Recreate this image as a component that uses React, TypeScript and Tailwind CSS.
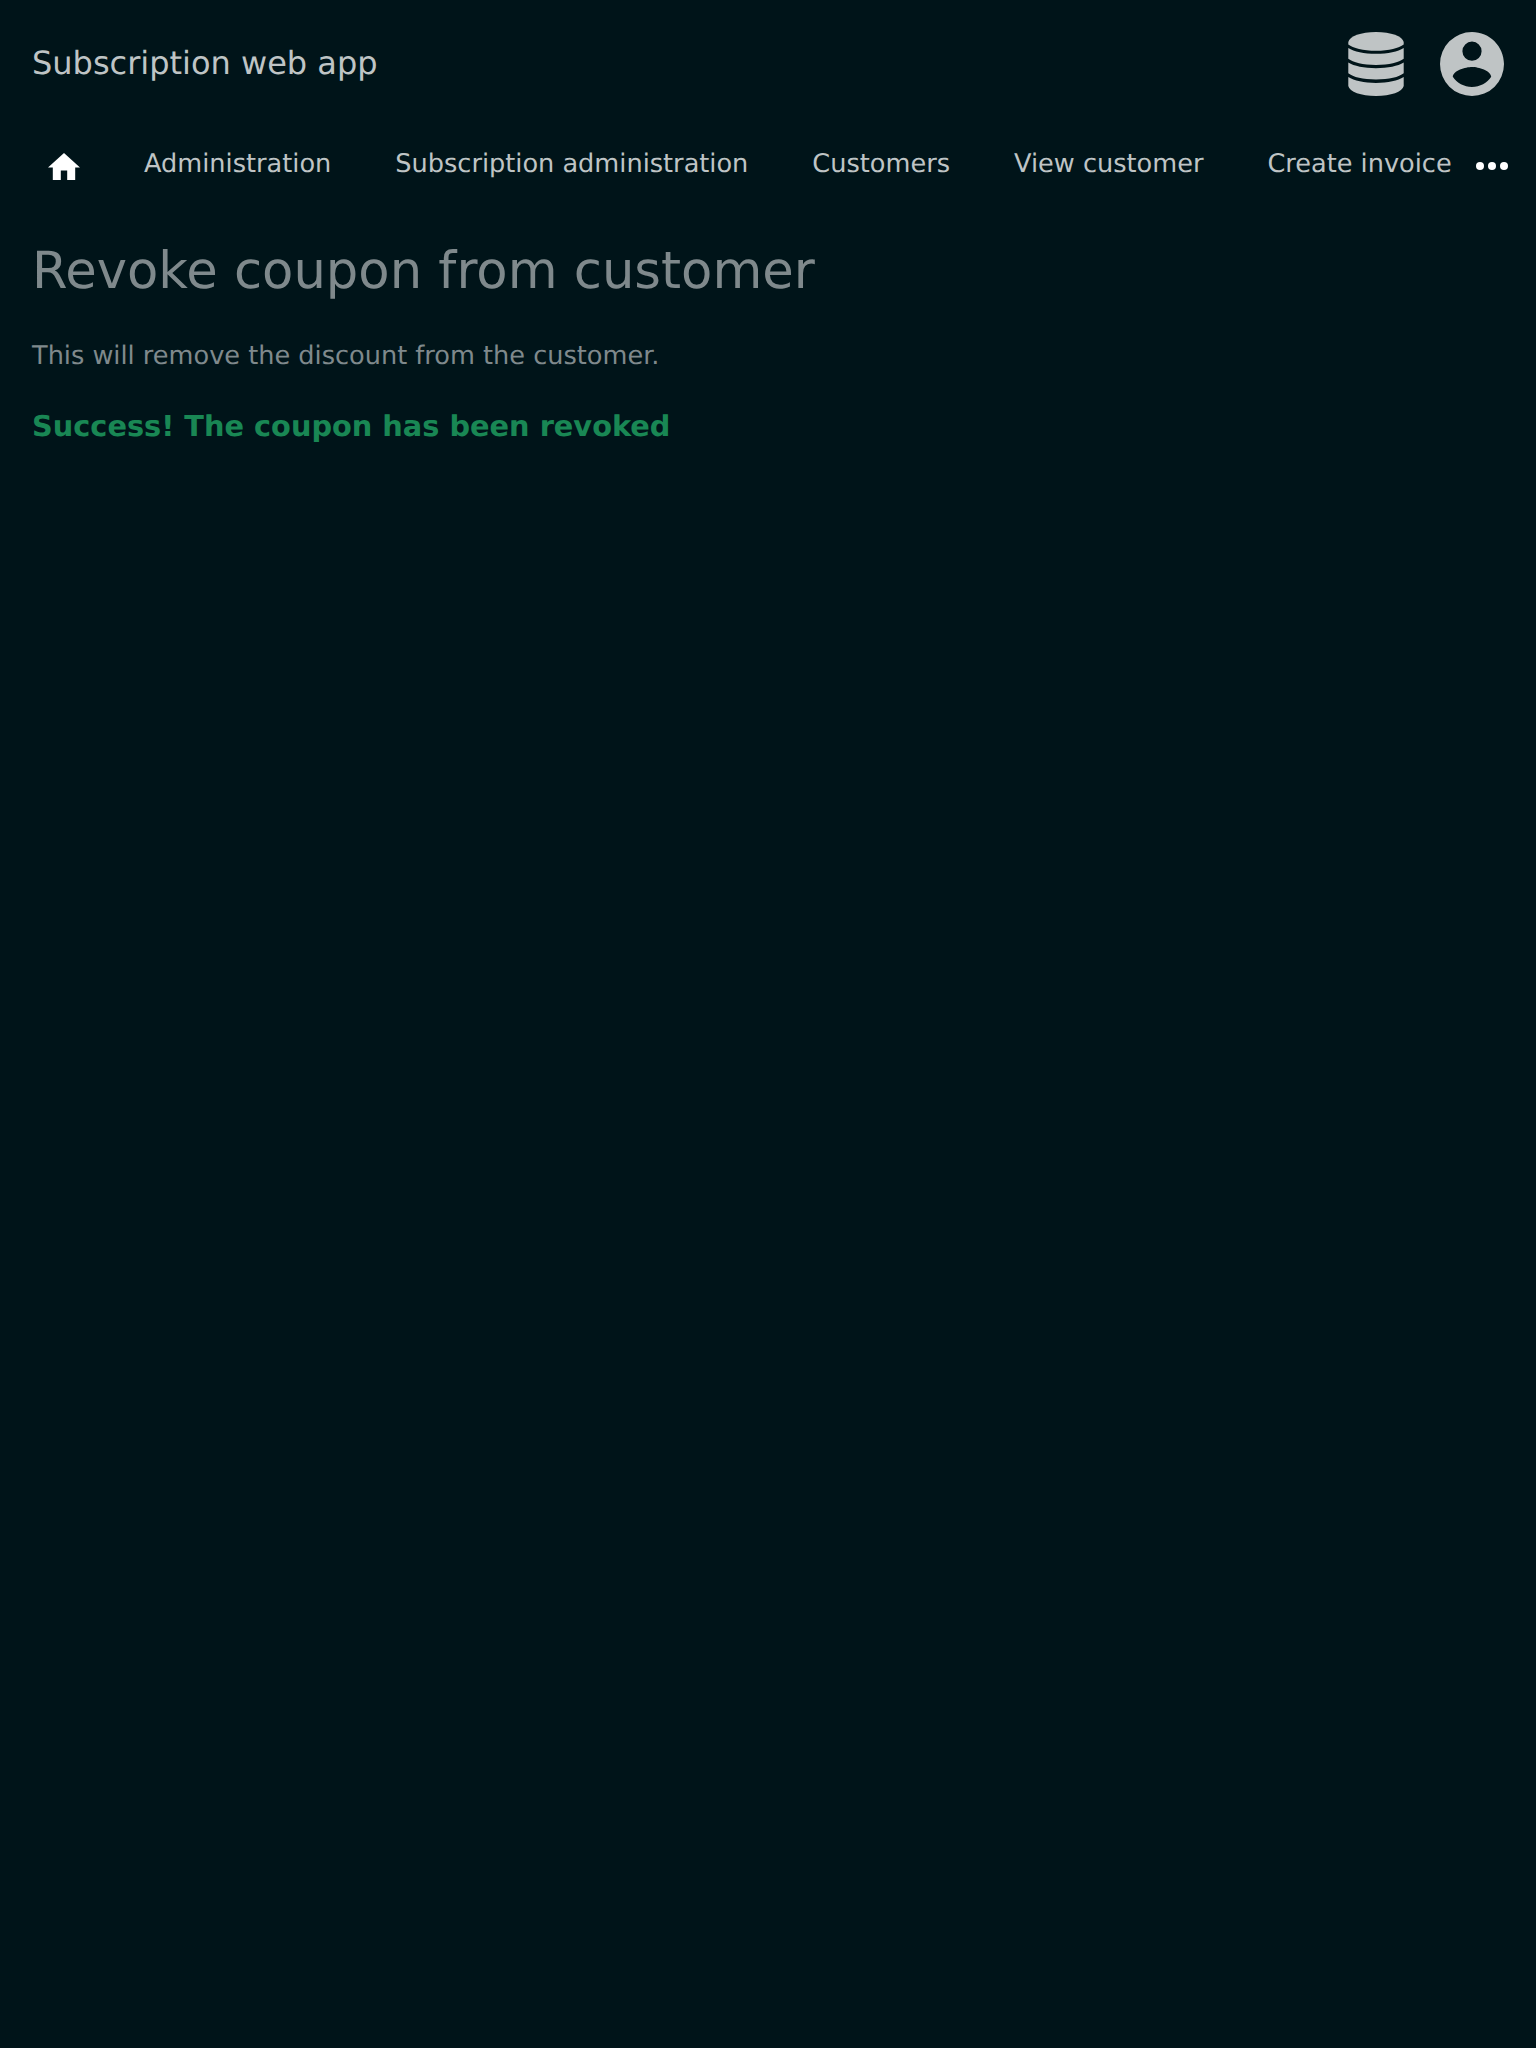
const links = ['Administration', 'Subscription administration', 'Customers', 'View customer', 'Create invoice']

function Database() {
  return (
    <svg className="h-16 w-14" viewBox="0 0 56 64" fill="currentColor">
      <path d="M.3 10C1.5 4.2 13 0 28 0S54.5 4.2 55.7 10V12.4C51 16 41 18.7 28 18.7S5 16 .3 12.4Z" />
      <path d="M.3 16C6 19.6 16 21.8 28 21.8S50 19.6 55.7 16V26.8C51 30.5 41 33 28 33S5 30.5 .3 26.8Z" />
      <path d="M.3 30.6C6 34.2 16 36.2 28 36.2S50 34.2 55.7 30.6V41.2C51 45 41 47.4 28 47.4S5 45 .3 41.2Z" />
      <path d="M.3 45C6 48.6 16 50.9 28 50.9S50 48.6 55.7 45V54C54.5 59.8 43 64 28 64S1.5 59.8 .3 54Z" />
    </svg>
  )
}

export default function App() {
  return (
    <div className="min-h-[2048px] overflow-hidden bg-[#001419] font-['DejaVu_Sans',sans-serif] text-[#7f898c] [text-rendering:geometricPrecision]">
      <header className="flex h-32 items-center justify-between px-8 text-[#bfc4c5]">
        <div className="mb-0.5 text-[32px] leading-[48px]">Subscription web app</div>
        <div className="flex gap-9">
          <Database />
          <svg className="size-16" viewBox="2 2 20 20" fill="currentColor">
            <path d="M12,19.2C9.5,19.2 7.29,17.92 6,16C6.03,14 10,12.9 12,12.9C14,12.9 17.97,14 18,16C16.71,17.92 14.5,19.2 12,19.2M12,5A3,3 0 0,1 15,8A3,3 0 0,1 12,11A3,3 0 0,1 9,8A3,3 0 0,1 12,5M12,2A10,10 0 0,0 2,12A10,10 0 0,0 12,22A10,10 0 0,0 22,12C22,6.47 17.5,2 12,2Z" />
          </svg>
        </div>
      </header>
      <nav className="flex h-[72px] items-center pr-7 pl-12 text-[25.6px] leading-[38px] whitespace-nowrap text-[#bfc4c5]">
        <svg className="mt-[5px] mr-16 h-[27.2px] w-8 text-white" viewBox="2 3 20 17" fill="currentColor">
          <path d="M10,20V14H14V20H19V12H22L12,3L2,12H5V20H10Z" />
        </svg>
        <div className="flex gap-16">
          {links.map((l) => <a key={l}>{l}</a>)}
        </div>
        <svg className="mt-1 ml-auto h-2 w-8 text-white" viewBox="0 0 32 8" fill="currentColor">
          <circle cx="4" cy="4" r="4" /><circle cx="16" cy="4" r="4" /><circle cx="28" cy="4" r="4" />
        </svg>
      </nav>
      <main className="px-8">
        <h1 className="mt-[33px] text-[51.2px] leading-[76px]">Revoke coupon from customer</h1>
        <p className="mt-7 text-[25.6px] leading-[38px]">This will remove the discount from the customer.</p>
        <p className="mt-[30px] text-[28.8px] leading-[43px] font-bold text-[#198754]">Success! The coupon has been revoked</p>
      </main>
    </div>
  )
}
